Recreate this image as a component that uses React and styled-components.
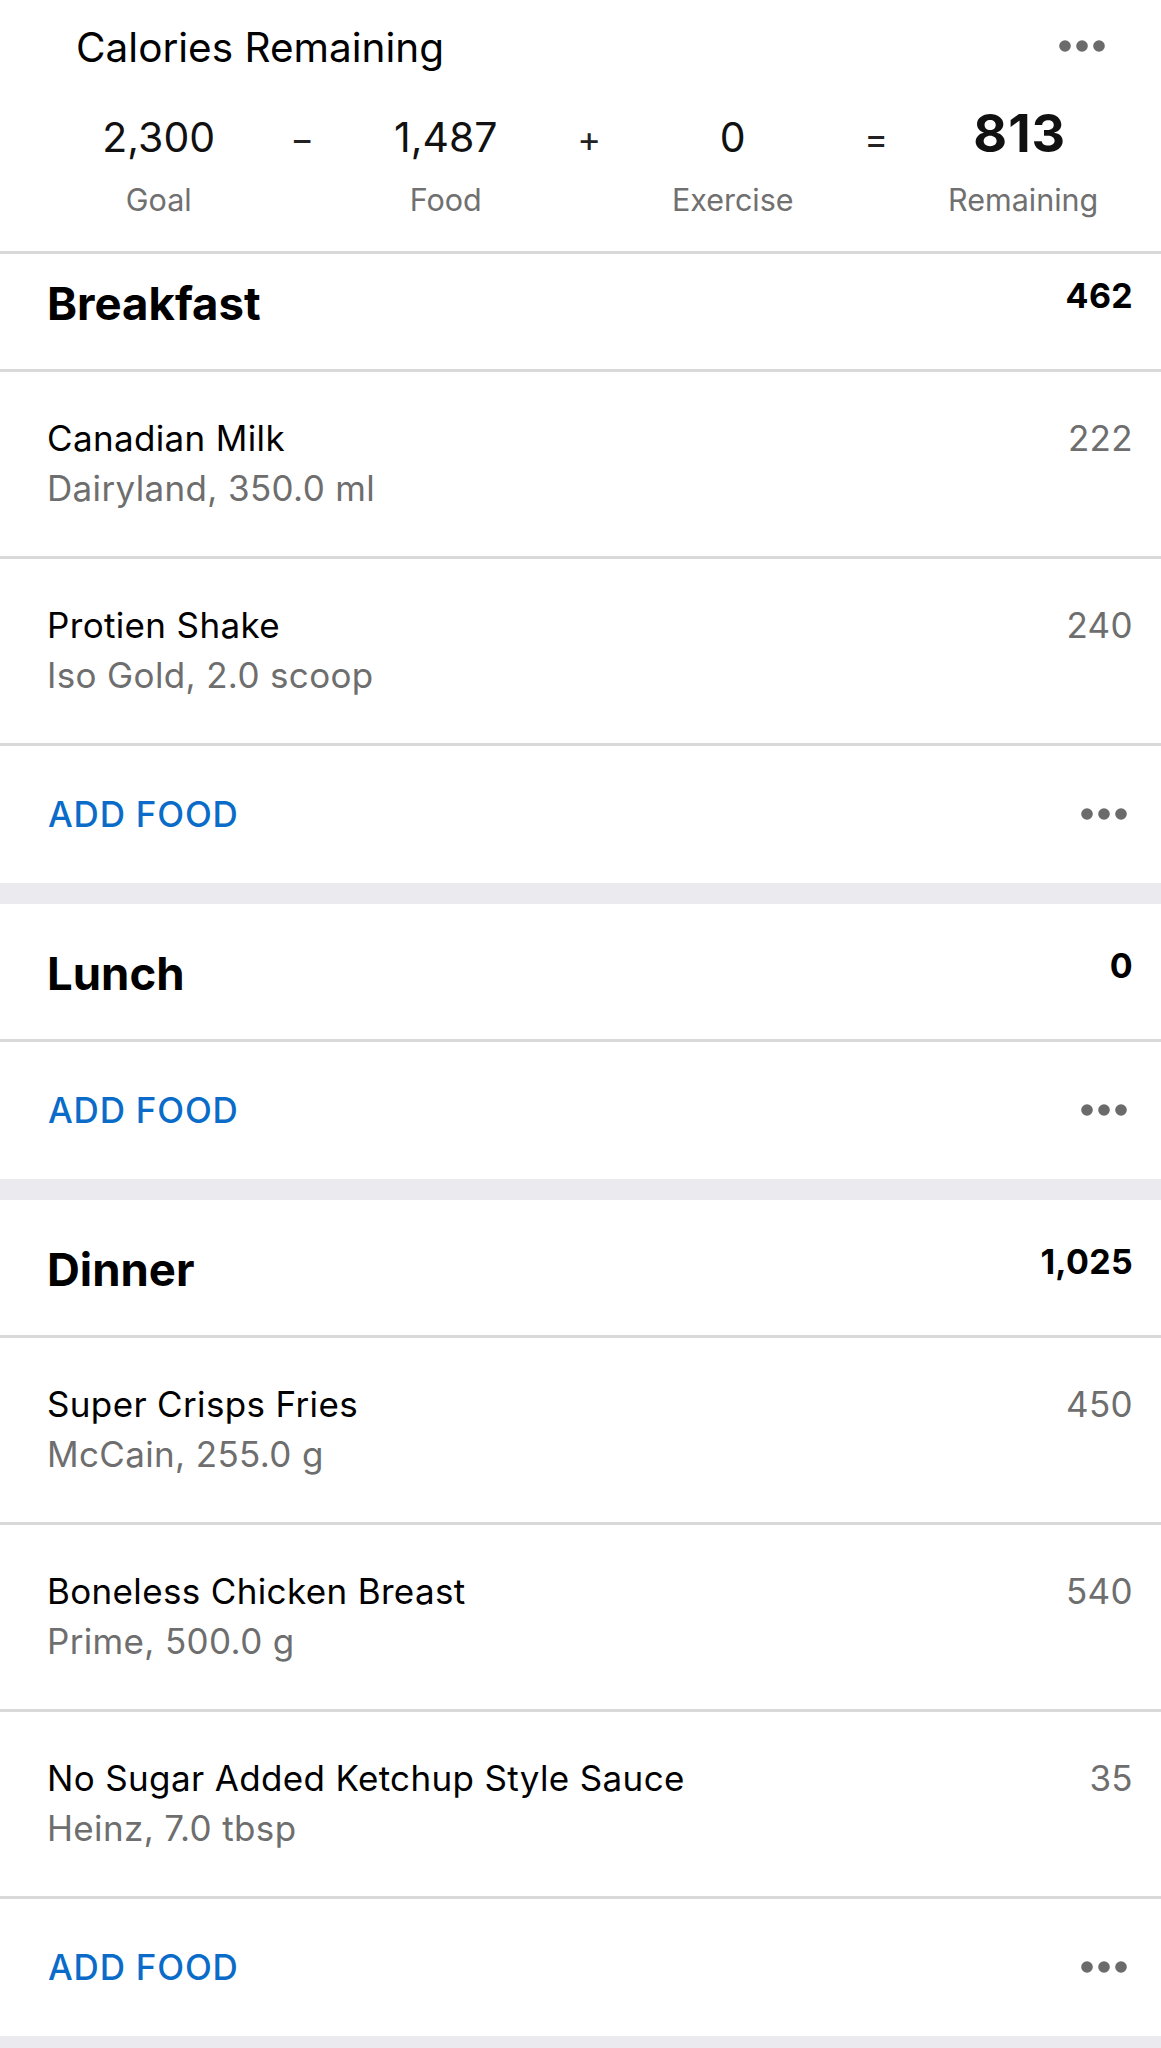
import React from 'react';
import styled, { createGlobalStyle } from 'styled-components';

const GlobalStyle = createGlobalStyle`
  body {
    margin: 0;
    background: #fff;
    font-family: Inter, "Noto Sans", sans-serif;
    color: #000;
  }
`;

const Page = styled.div`
  width: 1161px;
  background: #fff;
`;

const Summary = styled.section`
  padding: 23px 0 34px;
  border-bottom: 3px solid #d9d9d9;
`;

const SummaryTop = styled.div`
  display: flex;
  align-items: center;
  justify-content: space-between;
  padding: 0 54px 0 76px;
`;

const SummaryTitle = styled.h1`
  margin: 0;
  font-size: 40.5px;
  line-height: 49px;
  font-weight: 400;
`;

const Equation = styled.div`
  display: grid;
  grid-template-columns: repeat(7, 143.5px);
  grid-template-rows: auto auto;
  align-items: baseline;
  row-gap: 18px;
  margin: 32px 0 0 87px;
`;

const Figure = styled.div`
  grid-row: 1;
  text-align: center;
  font-size: ${({ $big }) => ($big ? '52px' : '41px')};
  font-weight: ${({ $big }) => ($big ? 700 : 400)};
  letter-spacing: ${({ $big }) => ($big ? '1px' : '0')};
  line-height: 1.15;
  color: #111;
`;

const Operator = styled.div`
  grid-row: 1;
  text-align: center;
  font-size: 36px;
  line-height: 1.2;
  color: #222;
`;

const Label = styled.div`
  grid-row: 2;
  grid-column: ${({ $col }) => $col};
  text-align: center;
  font-size: 30.5px;
  line-height: 35px;
  color: #707070;
`;

const Band = styled.div`
  height: 21px;
  background: #ebebef;
`;

const MealHeader = styled.div`
  box-sizing: border-box;
  height: ${({ $compact }) => ($compact ? '118px' : '138px')};
  padding: ${({ $compact }) => ($compact ? '22px' : '42px')} 28px 0 47px;
  display: flex;
  align-items: flex-start;
  justify-content: space-between;
  border-bottom: 3px solid #d9d9d9;
`;

const MealTitle = styled.h2`
  margin: 0;
  font-size: 45.5px;
  line-height: 55px;
  font-weight: 700;
`;

const MealTotal = styled.span`
  margin-top: -1px;
  font-size: 34px;
  line-height: 41px;
  font-weight: 700;
  letter-spacing: 0.3px;
`;

const FoodRow = styled.div`
  box-sizing: border-box;
  height: 187px;
  padding: 41px 28px 0 47px;
  display: flex;
  align-items: flex-start;
  justify-content: space-between;
  border-bottom: 3px solid #d9d9d9;
  font-size: 35px;
  line-height: 50px;
  letter-spacing: 0.35px;
`;

const FoodName = styled.div`
  color: #000;
`;

const FoodMeta = styled.div`
  color: #6e6e6e;
`;

const FoodCalories = styled.div`
  color: #6e6e6e;
`;

const AddRow = styled.div`
  height: 137px;
  padding: 0 32px 0 48px;
  display: flex;
  align-items: center;
  justify-content: space-between;
`;

const AddButton = styled.button`
  border: 0;
  padding: 0;
  background: none;
  font-family: inherit;
  font-size: 35px;
  font-weight: 500;
  color: #0a6cc8;
  letter-spacing: 0.8px;
`;

const DotsIcon = styled.svg`
  display: block;
  margin-top: ${({ $lift }) => ($lift ? '-4px' : '0')};
`;

const Dots = ({ lift }) => (
  <DotsIcon $lift={lift} width="48" height="12" viewBox="0 0 48 12">
    <circle cx="6" cy="6" r="5.8" fill="#6b6b6b" />
    <circle cx="23" cy="6" r="5.8" fill="#6b6b6b" />
    <circle cx="40" cy="6" r="5.8" fill="#6b6b6b" />
  </DotsIcon>
);

const meals = [
  {
    name: 'Breakfast',
    total: '462',
    items: [
      { name: 'Canadian Milk', meta: 'Dairyland, 350.0 ml', cal: '222' },
      { name: 'Protien Shake', meta: 'Iso Gold, 2.0 scoop', cal: '240' },
    ],
  },
  { name: 'Lunch', total: '0', items: [] },
  {
    name: 'Dinner',
    total: '1,025',
    items: [
      { name: 'Super Crisps Fries', meta: 'McCain, 255.0 g', cal: '450' },
      { name: 'Boneless Chicken Breast', meta: 'Prime, 500.0 g', cal: '540' },
      { name: 'No Sugar Added Ketchup Style Sauce', meta: 'Heinz, 7.0 tbsp', cal: '35' },
    ],
  },
];

const Meal = ({ meal, compact }) => (
  <section>
    <MealHeader $compact={compact}>
      <MealTitle>{meal.name}</MealTitle>
      <MealTotal>{meal.total}</MealTotal>
    </MealHeader>
    {meal.items.map(item => (
      <FoodRow key={item.name}>
        <div>
          <FoodName>{item.name}</FoodName>
          <FoodMeta>{item.meta}</FoodMeta>
        </div>
        <FoodCalories>{item.cal}</FoodCalories>
      </FoodRow>
    ))}
    <AddRow>
      <AddButton>ADD FOOD</AddButton>
      <Dots />
    </AddRow>
  </section>
);

export default function App() {
  return (
    <Page>
      <GlobalStyle />
      <Summary>
        <SummaryTop>
          <SummaryTitle>Calories Remaining</SummaryTitle>
          <Dots lift />
        </SummaryTop>
        <Equation>
          <Figure>2,300</Figure>
          <Operator>−</Operator>
          <Figure>1,487</Figure>
          <Operator>+</Operator>
          <Figure>0</Figure>
          <Operator>=</Operator>
          <Figure $big>813</Figure>
          <Label $col={1}>Goal</Label>
          <Label $col={3}>Food</Label>
          <Label $col={5}>Exercise</Label>
          <Label $col={7}>Remaining</Label>
        </Equation>
      </Summary>
      {meals.map((meal, i) => (
        <React.Fragment key={meal.name}>
          <Meal meal={meal} compact={i === 0} />
          <Band />
        </React.Fragment>
      ))}
    </Page>
  );
}
